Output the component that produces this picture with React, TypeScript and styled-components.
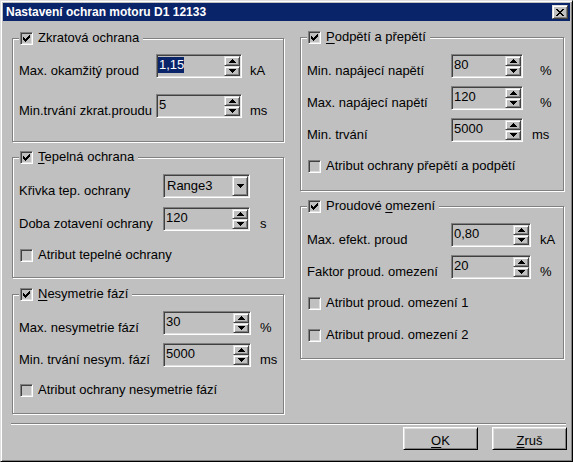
import React from "react";
import styled, { createGlobalStyle } from "styled-components";

const FACE = "#c0c0c0";
const LIGHT = "#dfdfdf";
const SHADOW = "#808080";
const DARK = "#404040";
const NAVY = "#0a246a";

const GlobalStyle = createGlobalStyle`
  html, body { margin: 0; padding: 0; background: ${FACE}; }
  body {
    font-family: "Liberation Sans", Arial, sans-serif;
    font-size: 13px;
    color: #000;
  }
`;

const Window = styled.div`
  width: 573px;
  height: 462px;
  box-sizing: border-box;
  border: 1px solid;
  border-color: ${LIGHT} #000 #000 ${LIGHT};
  box-shadow: inset 1px 1px 0 #fff, inset -1px -1px 0 ${SHADOW};
  padding: 2px;
  background: ${FACE};
  display: flex;
  flex-direction: column;
`;

const TitleBar = styled.div`
  height: 18px;
  flex: none;
  display: flex;
  align-items: center;
  background: ${NAVY};
  padding: 0 2px 0 3px;
`;

const TitleText = styled.span`
  flex: 1;
  color: #fff;
  font-weight: bold;
  font-size: 12px;
  line-height: 14px;
  white-space: nowrap;
`;

const Raised = styled.div`
  box-sizing: border-box;
  background: ${FACE};
  border: 1px solid;
  border-color: ${LIGHT} ${DARK} ${DARK} ${LIGHT};
  box-shadow: inset 1px 1px 0 #fff, inset -1px -1px 0 ${SHADOW};
  display: flex;
  align-items: center;
  justify-content: center;
`;

const CloseButton = styled(Raised)`
  width: 16px;
  height: 14px;
  flex: none;
`;

const Body = styled.div`
  display: flex;
  flex-direction: column;
`;

const Columns = styled.div`
  display: flex;
  align-items: flex-start;
  gap: 16px;
  padding: 16px 0 0 9px;
`;

const Column = styled.div<{ $w: number; $top: number }>`
  width: ${(p) => p.$w}px;
  padding-top: ${(p) => p.$top}px;
  display: flex;
  flex-direction: column;
  gap: 15px;
`;

const Group = styled.div<{ $pb: number; $mt?: number }>`
  border: 1px solid ${SHADOW};
  box-shadow: inset 1px 1px 0 #fff, 1px 1px 0 #fff;
  padding: 0 0 ${(p) => p.$pb}px 6px;
  margin-top: ${(p) => p.$mt ?? 0}px;
  display: flex;
  flex-direction: column;
  align-items: flex-start;
`;

const Legend = styled.div`
  display: flex;
  align-items: center;
  gap: 5px;
  height: 16px;
  margin-top: -9px;
  padding: 0 4px 0 1px;
  background: ${FACE};
  line-height: 16px;
  white-space: nowrap;
`;

const U = styled.span`
  text-decoration: underline;
  text-underline-offset: 2px;
`;

const FieldRow = styled.div<{ $mt: number }>`
  display: flex;
  align-items: flex-end;
  height: 24px;
  margin-top: ${(p) => p.$mt}px;
`;

const Label = styled.span<{ $w: number }>`
  width: ${(p) => p.$w}px;
  flex: none;
  line-height: 16px;
  margin-bottom: -1px;
  white-space: nowrap;
`;

const Unit = styled.span<{ $ml: number }>`
  margin-left: ${(p) => p.$ml}px;
  line-height: 16px;
  margin-bottom: -1px;
  white-space: nowrap;
`;

const Sunken = styled.div<{ $w: number }>`
  width: ${(p) => p.$w}px;
  height: 24px;
  flex: none;
  box-sizing: border-box;
  display: flex;
  border: 1px solid;
  border-color: ${SHADOW} #fff #fff ${SHADOW};
  box-shadow: inset 1px 1px 0 ${DARK}, inset -1px -1px 0 ${LIGHT};
  padding: 1px;
  background: ${FACE};
`;

const Value = styled.div<{ $center?: boolean }>`
  flex: 1;
  min-width: 0;
  line-height: 16px;
  padding: ${(p) => (p.$center ? "0 0 0 2px" : "1px 0 0 1px")};
  align-self: ${(p) => (p.$center ? "center" : "flex-start")};
  white-space: nowrap;
  overflow: hidden;
`;

const Selected = styled.span`
  display: inline-block;
  background: ${NAVY};
  color: #fff;
  line-height: 16px;
  margin-left: -1px;
  padding-left: 1px;
`;

const SpinCol = styled.div`
  width: 16px;
  flex: none;
  display: flex;
  flex-direction: column;
`;

const SpinButton = styled(Raised)`
  flex: 1;
`;

const DropButton = styled(Raised)`
  width: 16px;
  flex: none;
`;

const CheckRow = styled.div<{ $mt: number }>`
  display: flex;
  align-items: center;
  gap: 5px;
  height: 24px;
  margin-top: ${(p) => p.$mt}px;
  padding-left: 1px;
  line-height: 16px;
  white-space: nowrap;
`;

const Box = styled.span`
  width: 13px;
  height: 13px;
  flex: none;
  box-sizing: border-box;
  border: 1px solid;
  border-color: ${SHADOW} #fff #fff ${SHADOW};
  box-shadow: inset 1px 1px 0 ${DARK}, inset -1px -1px 0 ${LIGHT};
  background: ${FACE};
  display: flex;
  align-items: center;
  justify-content: center;
`;

const Separator = styled.div`
  height: 0;
  border-top: 1px solid ${SHADOW};
  border-bottom: 1px solid #fff;
  margin: 9px 4px 0 8px;
`;

const ButtonRow = styled.div`
  display: flex;
  justify-content: flex-end;
  gap: 14px;
  margin-top: 2px;
  padding-right: 3px;
`;

const PushButton = styled.button`
  width: 75px;
  height: 23px;
  box-sizing: border-box;
  background: ${FACE};
  border: 1px solid;
  border-color: #fff #000 #000 #fff;
  box-shadow: inset 1px 1px 0 ${LIGHT}, inset -1px -1px 0 ${SHADOW};
  font-family: inherit;
  font-size: 13px;
  color: #000;
  line-height: 16px;
  padding: 5px 0 0;
  margin: 0;
  text-align: center;
`;

const Px = ({ w, h, d }: { w: number; h: number; d: string }) => (
  <svg width={w} height={h} viewBox={`0 0 ${w} ${h}`} shapeRendering="crispEdges" style={{ display: "block" }}>
    <path d={d} fill="#000" />
  </svg>
);

const UP = "M3 0h1v1H3z M2 1h3v1H2z M1 2h5v1H1z M0 3h7v1H0z";
const DOWN = "M0 0h7v1H0z M1 1h5v1H1z M2 2h3v1H2z M3 3h1v1H3z";
const DROP = DOWN;
const CHECK =
  "M6 0h1v1H6z M5 1h2v1H5z M0 2h1v1H0z M4 2h3v1H4z M0 3h2v1H0z M3 3h3v1H3z M0 4h5v1H0z M1 5h3v1H1z M2 6h1v1H2z";
const CLOSE =
  "M0 0h2v1H0z M6 0h2v1H6z M1 1h2v1H1z M5 1h2v1H5z M2 2h4v1H2z M3 3h2v1H3z M2 4h4v1H2z M1 5h2v1H1z M5 5h2v1H5z M0 6h2v1H0z M6 6h2v1H6z";

const Check = ({ checked }: { checked?: boolean }) => (
  <Box>{checked && <Px w={7} h={7} d={CHECK} />}</Box>
);

type SpinProps = {
  label: string;
  labelW: number;
  w: number;
  value: string;
  unit: string;
  unitMl: number;
  mt: number;
  selected?: boolean;
};

const SpinRow = ({ label, labelW, w, value, unit, unitMl, mt, selected }: SpinProps) => (
  <FieldRow $mt={mt}>
    <Label $w={labelW}>{label}</Label>
    <Sunken $w={w}>
      <Value>{selected ? <Selected>{value}</Selected> : value}</Value>
      <SpinCol>
        <SpinButton>
          <Px w={7} h={4} d={UP} />
        </SpinButton>
        <SpinButton>
          <Px w={7} h={4} d={DOWN} />
        </SpinButton>
      </SpinCol>
    </Sunken>
    <Unit $ml={unitMl}>{unit}</Unit>
  </FieldRow>
);

const CheckLine = ({ text, mt }: { text: string; mt: number }) => (
  <CheckRow $mt={mt}>
    <Check />
    <span>{text}</span>
  </CheckRow>
);

export default function App() {
  return (
    <>
      <GlobalStyle />
      <Window>
        <TitleBar>
          <TitleText>Nastavení ochran motoru D1 12133</TitleText>
          <CloseButton>
            <Px w={8} h={7} d={CLOSE} />
          </CloseButton>
        </TitleBar>
        <Body>
          <Columns>
            <Column $w={272} $top={1}>
              <Group $pb={23}>
                <Legend>
                  <Check checked />
                  <span>Zkratová ochrana</span>
                </Legend>
                <SpinRow label="Max. okamžitý proud" labelW={137} w={86} value="1,15" unit="kA" unitMl={8} mt={8} selected />
                <SpinRow label="Min.trvání zkrat.proudu" labelW={137} w={86} value="5" unit="ms" unitMl={8} mt={16} />
              </Group>
              <Group $pb={10}>
                <Legend>
                  <Check checked />
                  <span>
                    <U>T</U>epelná ochrana
                  </span>
                </Legend>
                <FieldRow $mt={9}>
                  <Label $w={144}>Křivka tep. ochrany</Label>
                  <Sunken $w={87}>
                    <Value $center>Range3</Value>
                    <DropButton>
                      <Px w={7} h={4} d={DROP} />
                    </DropButton>
                  </Sunken>
                </FieldRow>
                <SpinRow label="Doba zotavení ochrany" labelW={144} w={87} value="120" unit="s" unitMl={10} mt={9} />
                <CheckLine text="Atribut tepelné ochrany" mt={12} />
              </Group>
              <Group $pb={11} $mt={1}>
                <Legend>
                  <Check checked />
                  <span>
                    <U>N</U>esymetrie fází
                  </span>
                </Legend>
                <SpinRow label="Max. nesymetrie fází" labelW={144} w={88} value="30" unit="%" unitMl={9} mt={9} />
                <SpinRow label="Min. trvání nesym. fází" labelW={144} w={88} value="5000" unit="ms" unitMl={9} mt={8} />
                <CheckLine text="Atribut ochrany nesymetrie fází" mt={11} />
              </Group>
            </Column>
            <Column $w={264} $top={0}>
              <Group $pb={12}>
                <Legend>
                  <Check checked />
                  <span>
                    <U>P</U>odpětí a přepětí
                  </span>
                </Legend>
                <SpinRow label="Min. napájecí napětí" labelW={144} w={72} value="80" unit="%" unitMl={17} mt={9} />
                <SpinRow label="Max. napájecí napětí" labelW={144} w={72} value="120" unit="%" unitMl={17} mt={8} />
                <SpinRow label="Min. trvání" labelW={144} w={72} value="5000" unit="ms" unitMl={9} mt={8} />
                <CheckLine text="Atribut ochrany přepětí a podpětí" mt={12} />
              </Group>
              <Group $pb={11}>
                <Legend>
                  <Check checked />
                  <span>
                    Proudové <U>o</U>mezení
                  </span>
                </Legend>
                <SpinRow label="Max. efekt. proud" labelW={144} w={80} value="0,80" unit="kA" unitMl={9} mt={9} />
                <SpinRow label="Faktor proud. omezení" labelW={144} w={80} value="20" unit="%" unitMl={9} mt={8} />
                <CheckLine text="Atribut proud. omezení 1" mt={12} />
                <CheckLine text="Atribut proud. omezení 2" mt={8} />
              </Group>
            </Column>
          </Columns>
          <Separator />
          <ButtonRow>
            <PushButton>
              <U>O</U>K
            </PushButton>
            <PushButton>
              <U>Z</U>ruš
            </PushButton>
          </ButtonRow>
        </Body>
      </Window>
    </>
  );
}
